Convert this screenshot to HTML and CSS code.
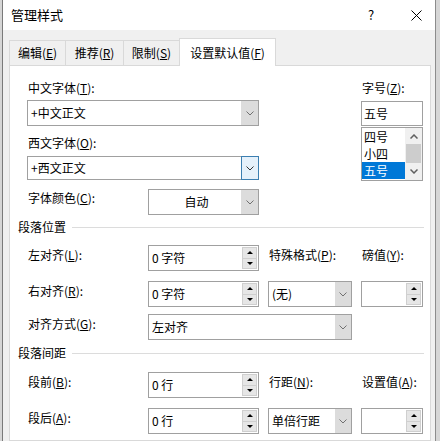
FILE: index.html
```html
<!DOCTYPE html>
<html>
<head>
<meta charset="utf-8">
<title>管理样式</title>
<link rel="stylesheet" href="styles.css">
</head>
<body>
<div class="window">
  <div class="titlebar">
    <span class="title">管理样式</span>
    <span class="help">?</span>
    <span class="close"><svg width="11" height="11" viewBox="0 0 11 11"><path d="M0.5 0.5 L10.5 10.5 M10.5 0.5 L0.5 10.5" stroke="#000" stroke-width="1" fill="none"/></svg></span>
  </div>
  <div class="dlg">
    <div class="tabs">
      <div class="tab t1">编辑(<u>E</u>)</div>
      <div class="tab t2">推荐(<u>R</u>)</div>
      <div class="tab t3">限制(<u>S</u>)</div>
      <div class="tab active">设置默认值(<u>F</u>)</div>
    </div>
    <div class="panel">
      <div class="fontarea">
        <div class="fontleft">
          <div class="lbl">中文字体(<u>T</u>):</div>
          <div class="combo c-wide c1">
            <span class="txt">+中文正文</span>
            <span class="dd"><svg width="8" height="5" viewBox="0 0 8 5"><polyline points="0.5,0.5 4,4 7.5,0.5" stroke="#707070" fill="none"/></svg></span>
          </div>
          <div class="lbl l2">西文字体(<u>O</u>):</div>
          <div class="combo c-wide c2">
            <span class="txt">+西文正文</span>
            <span class="dd focus"><svg width="8" height="5" viewBox="0 0 8 5"><polyline points="0.5,0.5 4,4 7.5,0.5" stroke="#333" fill="none"/></svg></span>
          </div>
          <div class="colorrow">
            <div class="lbl rl">字体颜色(<u>C</u>):</div>
            <div class="combo c-color">
              <span class="txt center">自动</span>
              <span class="dd"><svg width="8" height="5" viewBox="0 0 8 5"><polyline points="0.5,0.5 4,4 7.5,0.5" stroke="#707070" fill="none"/></svg></span>
            </div>
          </div>
        </div>
        <div class="fontright">
          <div class="lbl">字号(<u>Z</u>):</div>
          <div class="sizebox">五号</div>
          <div class="listbox">
            <div class="items">
              <div class="item">四号</div>
              <div class="item">小四</div>
              <div class="item sel">五号</div>
            </div>
            <div class="vscroll">
              <div class="sb-btn"><svg width="8" height="5" viewBox="0 0 8 5"><polyline points="0.5,4.5 4,1 7.5,4.5" stroke="#606060" stroke-width="1.5" fill="none"/></svg></div>
              <div class="sb-thumb"></div>
              <div class="sb-btn dn"><svg width="8" height="5" viewBox="0 0 8 5"><polyline points="0.5,0.5 4,4 7.5,0.5" stroke="#606060" stroke-width="1.5" fill="none"/></svg></div>
            </div>
          </div>
        </div>
      </div>

      <div class="section s1"><span>段落位置</span><i class="rule"></i></div>

      <div class="prow r1">
        <div class="lbl rl">左对齐(<u>L</u>):</div>
        <div class="spin"><span class="val">0 字符</span><span class="btns"><span class="sbtn"><i class="up"></i></span><span class="sbtn"><i class="down"></i></span></span></div>
        <div class="lbl rl">特殊格式(<u>P</u>):</div>
        <div class="lbl rl">磅值(<u>Y</u>):</div>
      </div>

      <div class="prow r2">
        <div class="lbl rl">右对齐(<u>R</u>):</div>
        <div class="spin"><span class="val">0 字符</span><span class="btns"><span class="sbtn"><i class="up"></i></span><span class="sbtn"><i class="down"></i></span></span></div>
        <div class="combo c-small">
          <span class="txt">(无)</span>
          <span class="dd sm"><svg width="8" height="5" viewBox="0 0 8 5"><polyline points="0.5,0.5 4,4 7.5,0.5" stroke="#707070" fill="none"/></svg></span>
        </div>
        <div class="spin"><span class="val"></span><span class="btns"><span class="sbtn"><i class="up"></i></span><span class="sbtn"><i class="down"></i></span></span></div>
      </div>

      <div class="prow r3">
        <div class="lbl rl">对齐方式(<u>G</u>):</div>
        <div class="combo c-span">
          <span class="txt">左对齐</span>
          <span class="dd sm"><svg width="8" height="5" viewBox="0 0 8 5"><polyline points="0.5,0.5 4,4 7.5,0.5" stroke="#707070" fill="none"/></svg></span>
        </div>
      </div>

      <div class="section s2"><span>段落间距</span><i class="rule"></i></div>

      <div class="prow r4">
        <div class="lbl rl">段前(<u>B</u>):</div>
        <div class="spin"><span class="val">0 行</span><span class="btns"><span class="sbtn"><i class="up"></i></span><span class="sbtn"><i class="down"></i></span></span></div>
        <div class="lbl rl">行距(<u>N</u>):</div>
        <div class="lbl rl">设置值(<u>A</u>):</div>
      </div>

      <div class="prow r5">
        <div class="lbl rl">段后(<u>A</u>):</div>
        <div class="spin"><span class="val">0 行</span><span class="btns"><span class="sbtn"><i class="up"></i></span><span class="sbtn"><i class="down"></i></span></span></div>
        <div class="combo c-small">
          <span class="txt">单倍行距</span>
          <span class="dd sm"><svg width="8" height="5" viewBox="0 0 8 5"><polyline points="0.5,0.5 4,4 7.5,0.5" stroke="#707070" fill="none"/></svg></span>
        </div>
        <div class="spin"><span class="val"></span><span class="btns"><span class="sbtn"><i class="up"></i></span><span class="sbtn"><i class="down"></i></span></span></div>
      </div>
    </div>
  </div>
</div>
</body>
</html>
```

FILE: styles.css
```css
* { box-sizing: border-box; }
html, body { margin: 0; height: 100%; }
body {
  background: #d6d6d6;
  font-family: "Noto Sans CJK SC", "Microsoft YaHei", sans-serif;
  font-size: 12px;
  line-height: 16px;
  color: #000;
  overflow: hidden;
}
u { text-decoration: underline; text-underline-offset: 1px; }

.window {
  margin-left: 2px;
  width: 434px;
  height: 441px;
  border-left: 1px solid #7a7a7a;
  border-right: 1px solid #8c8c8c;
  background: #f0f0f0;
  display: flex;
  flex-direction: column;
}

.titlebar {
  height: 30px;
  flex: none;
  background: #fff;
  display: flex;
  align-items: center;
  padding-left: 8px;
  padding-right: 4px;
}
.title { font-size: 13px; line-height: 18px; }
.help {
  margin-left: auto;
  width: 20px;
  text-align: center;
  font-size: 13px;
}
.close {
  margin-left: 20px;
  width: 30px;
  height: 11px;
  display: flex;
  justify-content: center;
}

.dlg {
  flex: 1;
  display: flex;
  flex-direction: column;
  padding: 8px 4px 0 6px;
  min-height: 0;
}

.tabs {
  height: 27px;
  flex: none;
  display: flex;
  align-items: flex-end;
}
.tab {
  height: 25px;
  padding-top: 4px;
  text-align: center;
  background: #f0f0f0;
  border-top: 1px solid #d9d9d9;
  border-right: 1px solid #d9d9d9;
  white-space: nowrap;
}
.t1 { width: 57px; border-left: 1px solid #d9d9d9; }
.t2 { width: 58px; }
.t3 { width: 55px; border-right: none; }
.tab.active {
  width: 97px;
  height: 28px;
  padding-top: 6px;
  margin-bottom: -1px;
  background: #fff;
  border-left: 1px solid #d9d9d9;
  position: relative;
  z-index: 1;
}

.panel {
  flex: 1;
  background: #fff;
  border: 1px solid #d9d9d9;
  padding-left: 8px;
  min-height: 0;
}

.fontarea {
  display: flex;
  margin-left: 9px;
  margin-top: 14px;
}
.fontleft { width: 232px; display: flex; flex-direction: column; }
.fontright { width: 62px; margin-left: 102px; display: flex; flex-direction: column; }

.lbl { height: 16px; padding-left: 1px; white-space: nowrap; }
.lbl.rl { padding-top: 2px; height: auto; }
.l2 { margin-top: 9px; }

.combo {
  border: 1px solid #a0a0a0;
  background: #fff;
  display: flex;
}
.combo .txt {
  flex: 1;
  padding-left: 3px;
  display: flex;
  align-items: center;
  white-space: nowrap;
}
.combo .txt.center { justify-content: center; }
.combo .dd {
  width: 17px;
  background: #dcdcdc;
  display: flex;
  align-items: center;
  justify-content: center;
}
.combo .dd.sm { width: 16px; }
.combo .dd.focus {
  width: 18px;
  margin: -1px -1px -1px 0;
  background: #e5f1fb;
  border: 1px solid #3c7fb1;
}
.c1 { margin-top: 4px; height: 26px; }
.c2 { margin-top: 5px; height: 24px; }

.colorrow {
  display: flex;
  margin-top: 9px;
  height: 26px;
}
.colorrow .lbl { width: 121px; padding-top: 1px; }
.c-color { width: 111px; height: 26px; }

.sizebox {
  margin-top: 5px;
  height: 25px;
  border: 1px solid #a0a0a0;
  padding-left: 2px;
  display: flex;
  align-items: center;
}
.listbox {
  margin-top: 1px;
  height: 54px;
  border: 1px solid #a0a0a0;
  display: flex;
}
.items { width: 43px; }
.item { height: 17px; line-height: 17px; padding-left: 2px; }
.item.sel { background: #0078d7; color: #fff; }
.vscroll {
  width: 17px;
  background: #f0f0f0;
  display: flex;
  flex-direction: column;
}
.sb-btn { height: 16px; display: flex; align-items: center; justify-content: center; }
.sb-btn.dn { height: 17px; }
.sb-thumb { height: 19px; margin: 0 1px; background: #cdcdcd; }

.section {
  width: 406px;
  height: 16px;
  display: flex;
  align-items: center;
  white-space: nowrap;
}
.section .rule { flex: 1; height: 1px; background: #dcdcdc; margin-left: 6px; }
.s1 { margin-top: 4px; }
.s2 { margin-top: 5px; }

.prow {
  display: grid;
  grid-template-columns: 112px 111px 84px 62px;
  column-gap: 9px;
  margin-left: 9px;
  height: 26px;
}
.r1 { margin-top: 10px; }
.r2 { margin-top: 10px; }
.r3 { margin-top: 7px; }
.r4 { margin-top: 11px; }
.r5 { margin-top: 10px; }
.c-span { grid-column: 2 / 4; }

.spin {
  border: 1px solid #a0a0a0;
  background: #fff;
  display: flex;
}
.spin .val {
  flex: 1;
  padding-left: 3px;
  display: flex;
  align-items: center;
  white-space: nowrap;
}
.spin .btns {
  width: 16px;
  padding: 1px 1px 1px 0;
  display: flex;
  flex-direction: column;
}
.sbtn {
  flex: 1;
  background: #e6e6e6;
  border: 1px solid #cfcfcf;
  display: flex;
  align-items: center;
  justify-content: center;
}
.sbtn + .sbtn { border-top: none; }
.up {
  width: 0; height: 0;
  border-left: 3px solid transparent;
  border-right: 3px solid transparent;
  border-bottom: 3px solid #000;
}
.down {
  width: 0; height: 0;
  border-left: 3px solid transparent;
  border-right: 3px solid transparent;
  border-top: 3px solid #000;
}
```
